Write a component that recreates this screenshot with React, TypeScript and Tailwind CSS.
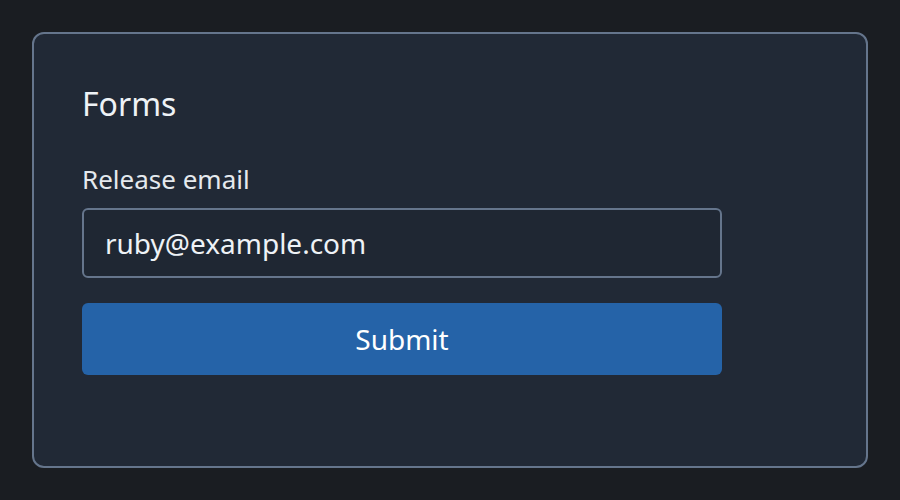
import React from "react";

export default function App() {
  return (
    <div
      className="min-h-[500px] w-[900px] bg-[#1a1d22] p-8"
      style={{ fontFamily: '"Noto Sans", "Open Sans", sans-serif' }}
    >
      <div className="h-[436px] rounded-xl border-2 border-[#65758c] bg-[#212936] pl-[48px] pt-[50px]">
        <h2 className="text-[32px] leading-[40px] text-[#eef2f6]">Forms</h2>
        <div className="mt-[37px] w-[640px]">
          <label className="block text-[26px] leading-[36px] text-[#e5e9ee]">Release email</label>
          <div className="mt-[11px] flex h-[70px] items-center rounded-[6px] border-2 border-[#65758c] bg-[#1f2733] px-[21px] text-[28px] text-[#eef2f6]">
            ruby@example.com
          </div>
          <button className="mt-[25px] flex h-[72px] w-full items-center justify-center rounded-[6px] bg-[#2563a8] text-[28px] text-white">
            Submit
          </button>
        </div>
      </div>
    </div>
  );
}
